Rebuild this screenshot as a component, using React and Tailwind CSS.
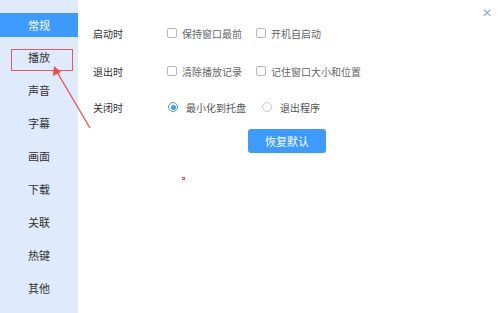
import React from "react";

const font = { fontFamily: '"Noto Sans CJK SC", "Noto Sans", sans-serif' };

function Checkbox({ label }) {
  return (
    <div className="flex items-center gap-[5px]">
      <span className="w-[10px] h-[10px] border border-[#b8b8b8] rounded-[2px] bg-white" />
      <span className="text-[10px] text-[#666]">{label}</span>
    </div>
  );
}

function Radio({ label, checked }) {
  return (
    <div className="flex items-center gap-[8px]">
      {checked ? (
        <span className="w-[10px] h-[10px] rounded-full border border-[#3d9bff] flex items-center justify-center">
          <span className="w-[5px] h-[5px] rounded-full bg-[#3d9bff]" />
        </span>
      ) : (
        <span className="w-[10px] h-[10px] rounded-full border border-[#c8c8c8]" />
      )}
      <span className="text-[10px] text-[#555]">{label}</span>
    </div>
  );
}

export default function App() {
  const items = ["播放", "声音", "字幕", "画面", "下载", "关联", "热键", "其他"];
  return (
    <div className="relative w-[500px] h-[313px] bg-white flex overflow-hidden" style={font}>
      <div className="w-[78px] h-full bg-[#dfeafd] flex flex-col pt-[13px]">
        <div className="h-[24px] bg-[#3d9bff] text-white text-[11px] flex items-center justify-center mb-[4px]">常规</div>
        {items.map((t) => (
          <div key={t} className="h-[33px] flex items-center justify-center text-[11px] text-[#333]">
            {t}
          </div>
        ))}
      </div>
      <div className="flex-1 flex flex-col pl-[15px] pt-[24px]">
        <div className="flex items-center h-[18px]">
          <span className="w-[74px] text-[10px] text-[#333]">启动时</span>
          <div className="w-[89px]"><Checkbox label="保持窗口最前" /></div>
          <Checkbox label="开机自启动" />
        </div>
        <div className="flex items-center h-[18px] mt-[20px]">
          <span className="w-[74px] text-[10px] text-[#333]">退出时</span>
          <div className="w-[89px]"><Checkbox label="清除播放记录" /></div>
          <Checkbox label="记住窗口大小和位置" />
        </div>
        <div className="flex items-center h-[18px] mt-[18px]">
          <span className="w-[75px] text-[10px] text-[#333]">关闭时</span>
          <div className="w-[94px]"><Radio label="最小化到托盘" checked /></div>
          <Radio label="退出程序" />
        </div>
        <div className="mt-[13px] ml-[155px] w-[78px] h-[24px] rounded-[3px] bg-[#3d9bff] text-white text-[11px] flex items-center justify-center">
          恢复默认
        </div>
      </div>
      <div className="absolute right-[8px] top-[6px] text-[#9aaabf] text-[12px] leading-none">✕</div>
      <div className="absolute left-[11px] top-[49px] w-[62px] h-[22px] border border-[#e85a5a]" />
      <div className="absolute left-[182px] top-[177px] w-[3px] h-[3px] border border-[#e85a5a]" />
      <svg className="absolute left-0 top-0" width="500" height="313">
        <line x1="90" y1="128" x2="57" y2="72" stroke="#f24b4b" strokeWidth="1.3" />
        <polygon points="54,66 53,76 61,72" fill="#f24b4b" />
      </svg>
    </div>
  );
}
